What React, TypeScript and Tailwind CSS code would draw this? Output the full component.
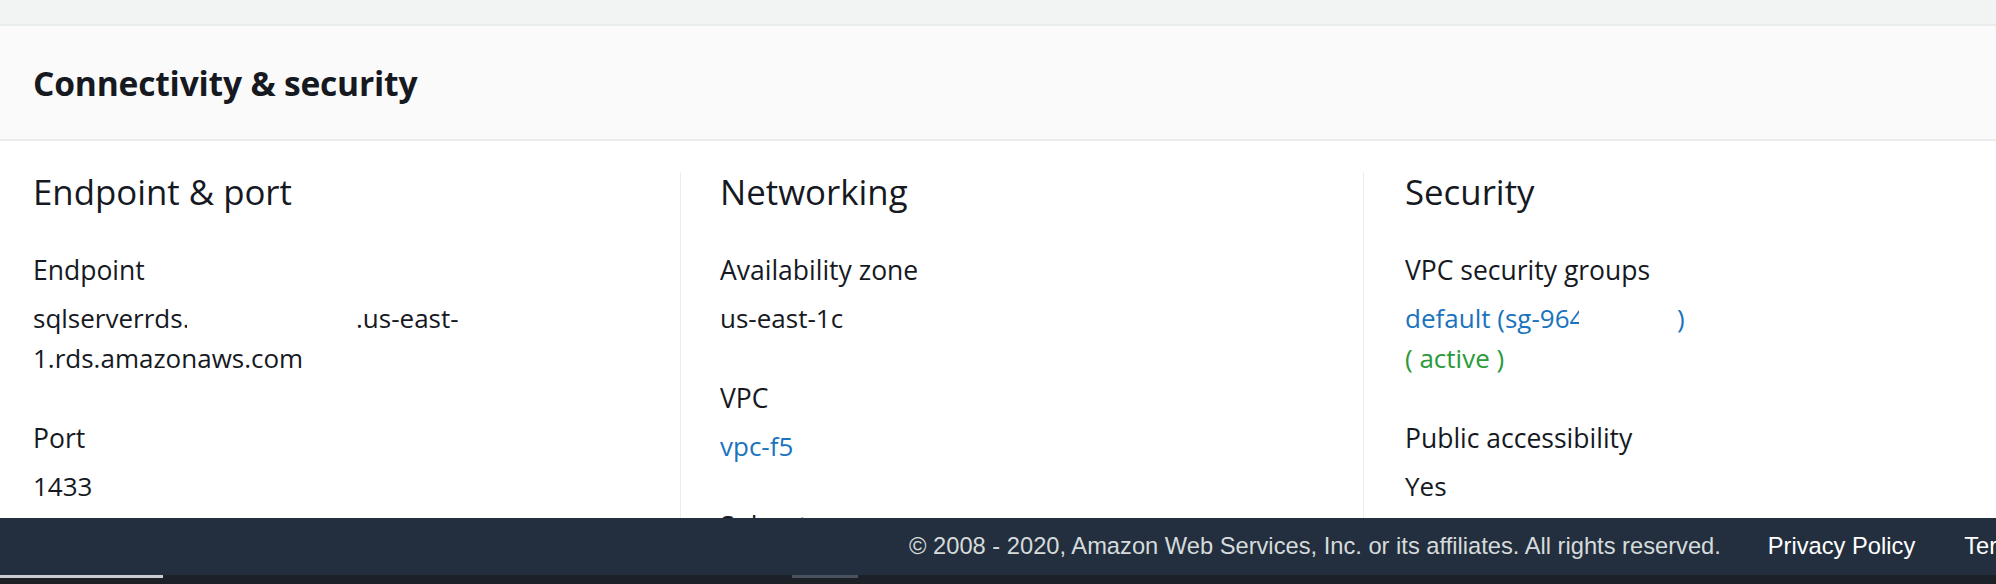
import React from "react";

const sans = "font-['Open_Sans','Noto_Sans',sans-serif]";

function Label({ children }: { children: React.ReactNode }) {
  return <div className="text-[26.5px] leading-[40px] text-[#16191f]">{children}</div>;
}

function Value({ children }: { children: React.ReactNode }) {
  return <div className="mt-2 text-[26px] leading-[40px] text-[#16191f]">{children}</div>;
}

function Item({ label, children }: { label: string; children: React.ReactNode }) {
  return (
    <div>
      <Label>{label}</Label>
      <Value>{children}</Value>
    </div>
  );
}

function ColumnHeading({ children }: { children: React.ReactNode }) {
  return <h3 className="text-[34.8px] leading-[40px] font-normal text-[#16191f]">{children}</h3>;
}

export default function App() {
  return (
    <div className={`${sans} w-[1996px] h-[584px] overflow-hidden flex flex-col bg-white`}>
      {/* top strip */}
      <div className="h-[26px] shrink-0 bg-[#f2f3f3] border-b-2 border-[#eaeded]" />

      {/* panel header */}
      <div className="h-[115px] shrink-0 bg-[#fafafa] border-b-2 border-[#eaeded] flex items-center pl-[33px]">
        <h2 className="text-[33.6px] font-bold leading-[40px] text-[#16191f] tracking-[-0.2px]">
          Connectivity &amp; security
        </h2>
      </div>

      {/* content */}
      <div className="flex-1 min-h-0 overflow-hidden pt-[31px]">
        <div className="grid grid-cols-[680px_683px_683px] h-full">
          {/* Endpoint & port */}
          <div className="pl-[33px] pr-[30px]">
            <ColumnHeading>Endpoint &amp; port</ColumnHeading>
            <div className="mt-[38px] flex flex-col gap-10">
              <Item label="Endpoint">
                <div>
                  <span className="inline-block w-[323px] whitespace-nowrap">
                    sqlserverrds
                    <span className="inline-block w-[4px] overflow-hidden align-bottom">.</span>
                  </span>
                  <span>.us-east-</span>
                </div>
                <div>1.rds.amazonaws.com</div>
              </Item>
              <Item label="Port">1433</Item>
            </div>
          </div>

          {/* Networking */}
          <div className="border-l border-[#eaeded] pl-[39px] pr-[30px]">
            <ColumnHeading>Networking</ColumnHeading>
            <div className="mt-[38px] flex flex-col gap-10">
              <Item label="Availability zone">us-east-1c</Item>
              <Item label="VPC">
                <a className="text-[#1a73bd]">vpc-f5</a>
              </Item>
              <Item label="Subnets">
                <span className="text-[#1a73bd]">subnet</span>
              </Item>
            </div>
          </div>

          {/* Security */}
          <div className="border-l border-[#eaeded] pl-[41px] pr-[30px]">
            <ColumnHeading>Security</ColumnHeading>
            <div className="mt-[38px] flex flex-col gap-10">
              <Item label="VPC security groups">
                <div className="text-[#1a73bd]">
                  <span className="inline-block w-[272px] whitespace-nowrap">
                    default (sg-96
                    <span className="inline-block w-[9px] overflow-hidden align-bottom">4</span>
                  </span>
                  <span>)</span>
                </div>
                <div className="text-[#2a9a3a]">( active )</div>
              </Item>
              <Item label="Public accessibility">Yes</Item>
            </div>
          </div>
        </div>
      </div>

      {/* footer */}
      <div className="h-[57px] shrink-0 bg-[#232f3e] flex items-center pl-[909px] whitespace-nowrap overflow-hidden font-['Liberation_Sans',Arial,sans-serif] text-[23.7px]">
        <span className="text-[#d5dbdb]">
          © 2008 - 2020, Amazon Web Services, Inc. or its affiliates. All rights reserved.
        </span>
        <a className="ml-[47px] text-white">Privacy Policy</a>
        <a className="ml-[49px] text-white">Terms of Use</a>
        <a className="ml-[49px] text-white">Cookie preferences</a>
      </div>

      {/* bottom strip */}
      <div className="h-[9px] shrink-0 bg-[#1c2128] flex items-start">
        <div className="w-[163px] h-[3px] bg-[#c9ccd0]" />
        <div className="ml-[629px] w-[66px] h-[3px] bg-[#4a5260]" />
      </div>
    </div>
  );
}
